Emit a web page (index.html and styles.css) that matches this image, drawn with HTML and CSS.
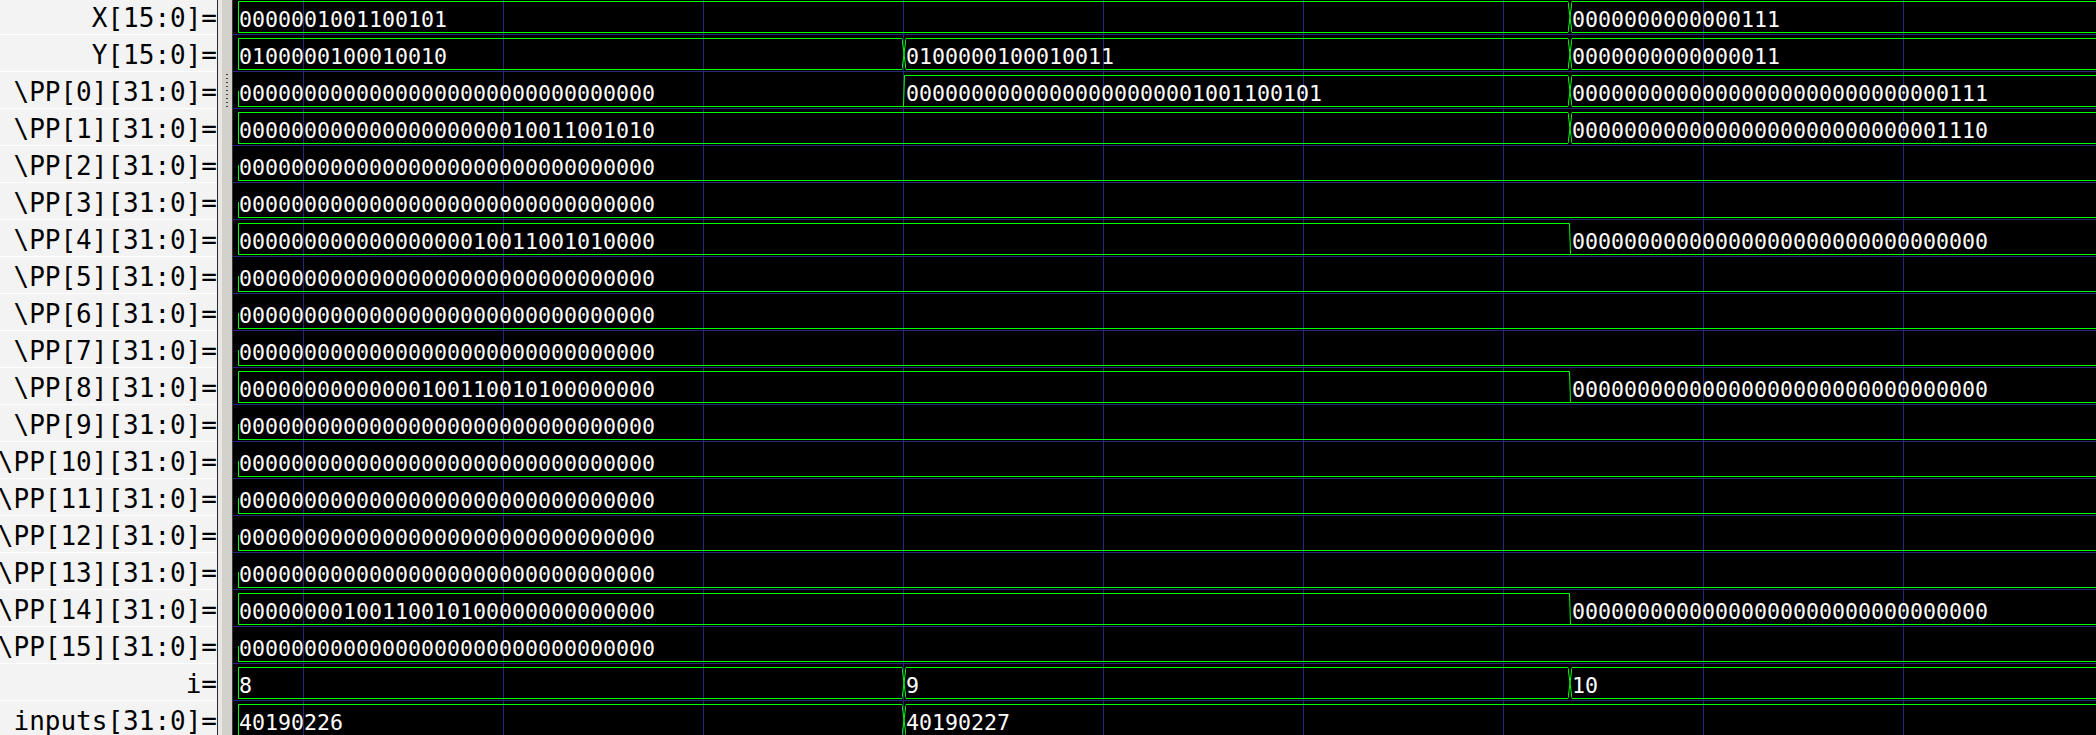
FILE: index.html
```html
<!DOCTYPE html>
<html lang="en">
<head>
  <meta charset="UTF-8" />
  <title>GTKWave - mult.vcd</title>
  <link rel="stylesheet" href="styles.css">
</head>
<body>
  <div class="viewer">
    <div class="signals"><div class="list" id="names"></div></div>
    <div class="splitter"><div class="grip"></div></div>
    <div class="waves"><div class="list" id="traces"></div></div>
  </div>

<script>
  // x positions (px) of the value changes on screen
  const T = [237, 904, 1570];
  const Z32 = '00000000000000000000000000000000';

  const signals = [
    ['X[15:0]', [[0, '0000001001100101'], [2, '0000000000000111']]],
    ['Y[15:0]', [[0, '0100000100010010'], [1, '0100000100010011'], [2, '0000000000000011']]],
    ['\\PP[0][31:0]', [[0, Z32], [1, '00000000000000000000001001100101'], [2, '00000000000000000000000000000111']]],
    ['\\PP[1][31:0]', [[0, '00000000000000000000010011001010'], [2, '00000000000000000000000000001110']]],
    ['\\PP[2][31:0]', [[0, Z32]]],
    ['\\PP[3][31:0]', [[0, Z32]]],
    ['\\PP[4][31:0]', [[0, '00000000000000000010011001010000'], [2, Z32]]],
    ['\\PP[5][31:0]', [[0, Z32]]],
    ['\\PP[6][31:0]', [[0, Z32]]],
    ['\\PP[7][31:0]', [[0, Z32]]],
    ['\\PP[8][31:0]', [[0, '00000000000000100110010100000000'], [2, Z32]]],
    ['\\PP[9][31:0]', [[0, Z32]]],
    ['\\PP[10][31:0]', [[0, Z32]]],
    ['\\PP[11][31:0]', [[0, Z32]]],
    ['\\PP[12][31:0]', [[0, Z32]]],
    ['\\PP[13][31:0]', [[0, Z32]]],
    ['\\PP[14][31:0]', [[0, '00000000100110010100000000000000'], [2, Z32]]],
    ['\\PP[15][31:0]', [[0, Z32]]],
    ['i', [[0, '8'], [1, '9'], [2, '10']]],
    ['inputs[31:0]', [[0, '40190226'], [1, '40190227']]]
  ];

  const paths = {
    startOn:  'M1.5 0.5H2M1.5 0.5V31.5H2',
    startOff: 'M1.5 16V31.5H2',
    onOn:     'M0 0.5L2 16L0 31.5M4 0.5L2 16L4 31.5',
    offOn:    'M0 31.5H4M1.5 31.5L2.5 0.5H4',
    onOff:    'M0 0.5H1.5L2.5 31.5M0 31.5H4'
  };

  function edge(kind) {
    const w = kind.startsWith('start') ? 2 : 4;
    return `<svg class="edge" width="${w}" height="32"><path d="${paths[kind]}"/></svg>`;
  }

  const isZero = v => /^0+$/.test(v);

  const names = document.getElementById('names');
  const traces = document.getElementById('traces');

  signals.forEach(([name, segs]) => {
    const label = document.createElement('div');
    label.className = 'name';
    label.textContent = name + '=';
    names.appendChild(label);

    let html = edge(isZero(segs[0][1]) ? 'startOff' : 'startOn');
    segs.forEach(([at, value], n) => {
      const on = !isZero(value);
      if (n > 0) {
        const prevOn = !isZero(segs[n - 1][1]);
        html += edge((prevOn ? 'on' : 'off') + (on ? 'On' : 'Off'));
      }
      const next = segs[n + 1];
      const cls = 'seg' + (on ? ' on' : '') + (next ? '' : ' last');
      const style = next ? ` style="width:${(T[next[0]] - 2) - (T[at] + 2)}px"` : '';
      html += `<div class="${cls}"${style}>${value}</div>`;
    });

    const row = document.createElement('div');
    row.className = 'trace';
    row.innerHTML = html;
    traces.appendChild(row);
  });
</script>
</body>
</html>
```

FILE: styles.css
```css
* {
  box-sizing: border-box;
}
body {
  margin: 0;
  background: #000;
  overflow: hidden;
}
.viewer {
  display: flex;
  width: 2096px;
  height: 735px;
  overflow: hidden;
}
.list {
  margin-top: -2px;
}

/* signal names */
.signals {
  flex: none;
  width: 218px;
  background: #f3f3f3;
  border-right: 1px solid #2b2b2b;
  overflow: hidden;
}
.name {
  height: 37px;
  border-bottom: 1px solid #fff;
  display: flex;
  justify-content: flex-end;
  padding-top: 5px;
  font-family: "DejaVu Sans Mono", monospace;
  font-size: 26px;
  line-height: 30px;
  white-space: nowrap;
  color: #000;
}

/* pane handle */
.splitter {
  flex: none;
  width: 15px;
  background: #d3d1cc;
  border-right: 1px solid #3a3a3a;
  box-shadow: inset 4px 0 #e9e8e5;
  padding: 74px 0 0 8px;
}
.grip {
  width: 2px;
  height: 33px;
  background: repeating-linear-gradient(to bottom, #444 0 1px, transparent 1px 4px);
}

/* waveforms */
.waves {
  flex: 1;
  background-color: #000;
  background-image: linear-gradient(to right, #26267a 1px, transparent 1px);
  background-size: 200px 100%;
  background-position: 70px 0;
  overflow: hidden;
}
.trace {
  height: 37px;
  border-bottom: 1px solid #26267a;
  display: flex;
  padding: 3px 0 0 4px;
}
.seg {
  flex: none;
  height: 32px;
  border-top: 1px solid transparent;
  border-bottom: 1px solid #00ff00;
  padding-top: 5px;
  color: #fff;
  font-family: "DejaVu Sans Mono", monospace;
  font-size: 21.6px;
  line-height: 25px;
  white-space: nowrap;
  overflow: hidden;
}
.seg.on {
  border-top-color: #00ff00;
}
.seg.last {
  flex: 1;
  min-width: 0;
}
.edge {
  flex: none;
  display: block;
}
.edge path {
  fill: none;
  stroke: #00ff00;
  stroke-width: 1;
}
```
